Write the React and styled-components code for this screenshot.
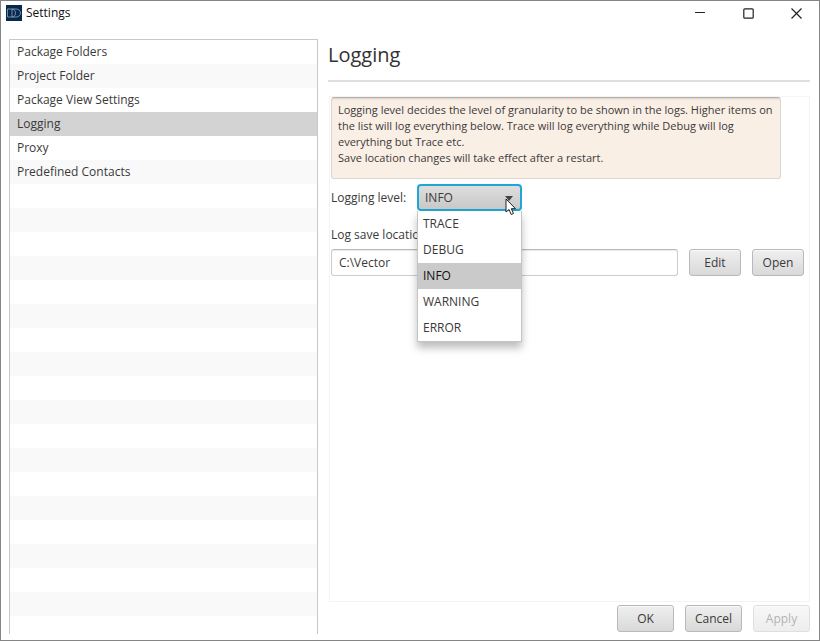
import React, { useState } from "react";
import styled, { createGlobalStyle, css } from "styled-components";

const GlobalStyle = createGlobalStyle`
  *, *::before, *::after { box-sizing: border-box; }
  body {
    margin: 0;
    background: #fff;
    color: #3a3a3a;
    font: 12px/16px "Segoe UI", "Open Sans", "Noto Sans", sans-serif;
  }
  button, input, select { font: inherit; color: inherit; }
`;

const Window = styled.div`
  height: 100vh;
  min-height: 400px;
  display: flex;
  flex-direction: column;
  border: 1px solid #858585;
  background: #fff;
`;

const TitleBar = styled.header`
  display: flex;
  align-items: center;
  gap: 4px;
  height: 24px;
  flex: none;
  padding-left: 5px;
  color: #111;
`;

const WindowTitle = styled.span`
  flex: 1;
`;

const WindowButton = styled.button`
  width: 48px;
  height: 24px;
  padding: 0;
  border: 0;
  background: none;
  display: grid;
  place-items: center;
  color: #222;
`;

const WindowControls = styled.div`
  display: flex;
  margin-right: -1px;
`;

const Body = styled.div`
  flex: 1;
  min-height: 0;
  display: grid;
  grid-template-columns: minmax(200px, 309fr) minmax(400px, 482fr);
  column-gap: 10px;
  padding: 14px 9px 6px 8px;
`;

const Categories = styled.nav`
  overflow: hidden;
  border: 1px solid #c8c8c8;
  border-bottom: 0;
  background: repeating-linear-gradient(#fff 0 24px, #f9f9f9 24px 48px);
`;

const CategoryList = styled.ul`
  list-style: none;
  margin: 0;
  padding: 0;
`;

const CategoryLink = styled.a`
  display: block;
  height: 24px;
  padding-left: 7px;
  line-height: 24px;
  color: inherit;
  text-decoration: none;
  ${(p) => p.$active && css`background: #d3d3d3;`}
`;

const Content = styled.main`
  display: flex;
  flex-direction: column;
  min-width: 0;
`;

const Heading = styled.h1`
  margin: 0;
  height: 43px;
  flex: none;
  border-bottom: 2px solid #e0e0e0;
  font-size: 20px;
  font-weight: 400;
  line-height: 32px;
  color: #333;
`;

const Panel = styled.section`
  flex: 1;
  min-height: 0;
  margin: 14px 0 0 1px;
  padding: 0 5px 0 1px;
  border: 1px solid #f4f4f4;
`;

const Notice = styled.p`
  margin: 0 23px 5px 0;
  height: 82px;
  padding: 4px 0 0 6px;
  border: 1px solid #ded6cf;
  border-top-color: #b5b0ab;
  border-radius: 3px;
  background: #faefe5;
  box-shadow: inset 0 2px 2px -1px #d8cfc7;
  font-size: 11px;
`;

const LevelRow = styled.div`
  display: flex;
  align-items: center;
  gap: 10px;
  height: 27px;
`;

const LevelLabel = styled.label`
  width: 76px;
  white-space: nowrap;
`;

const Combo = styled.div`
  position: relative;
  width: 105px;
`;

const LevelSelect = styled.select`
  appearance: none;
  display: block;
  width: 100%;
  height: 27px;
  padding: 0 6px;
  border: 2px solid #1ea6d4;
  border-radius: 4px;
  outline: 0;
  background: linear-gradient(#dedede, #c8c8c8);
`;

const ComboArrow = styled.svg`
  position: absolute;
  right: 9px;
  top: 12px;
  pointer-events: none;
`;

const Pointer = styled.svg`
  position: absolute;
  right: 5px;
  top: 14px;
  z-index: 2;
  pointer-events: none;
`;

const Options = styled.ul`
  position: absolute;
  z-index: 1;
  top: 27px;
  left: 0;
  right: 0;
  margin: 0;
  padding: 0;
  list-style: none;
  border: 1px solid #c4c4c4;
  border-top: 0;
  background: #fff;
  box-shadow: 0 6px 8px rgba(0, 0, 0, 0.26);
`;

const Option = styled.li`
  height: 26px;
  padding-left: 5px;
  line-height: 26px;
  ${(p) => p.$selected && css`
    background: #cacaca;
    color: #111;
  `}
`;

const LocationLabel = styled.label`
  display: block;
  margin: 16px 0 6px;
`;

const LocationRow = styled.div`
  display: flex;
  gap: 11px;
`;

const LocationInput = styled.input`
  flex: 1;
  min-width: 0;
  height: 27px;
  padding: 0 7px;
  border: 1px solid #cdcdcd;
  border-top-color: #b8b8b8;
  border-radius: 3px;
  box-shadow: inset 0 1px 1px #ececec;
  outline: 0;
`;

const Button = styled.button`
  width: ${(p) => (p.$wide ? "57px" : "52px")};
  height: 27px;
  padding: 0;
  border: 1px solid #b9b9b9;
  border-radius: 3px;
  background: linear-gradient(#efefef, #d9d9d9);
  box-shadow: inset 0 1px 0 #f8f8f8;
  &:disabled {
    opacity: 0.45;
    color: #555;
  }
`;

const Actions = styled.footer`
  display: flex;
  justify-content: flex-end;
  gap: 11px;
  padding: 3px 0 2px;
`;

const AppLogo = () => (
  <svg width="16" height="16" viewBox="0 0 16 16" aria-hidden="true">
    <rect width="16" height="16" fill="#07294d" />
    <g fill="none" stroke="#8fa6bd" strokeWidth="0.8">
      <path d="M1.500 4H5.500C8 4 9.500 5.800 9.500 8S8 12 5.500 12H1.500Z" />
      <path d="M6 4V12M6 4H10C12.800 4 14.500 5.800 14.500 8S12.800 12 10 12H6" />
    </g>
  </svg>
);

const categories = [
  "Package Folders",
  "Project Folder",
  "Package View Settings",
  "Logging",
  "Proxy",
  "Predefined Contacts",
];

const levels = ["TRACE", "DEBUG", "INFO", "WARNING", "ERROR"];

export default function App() {
  const [category, setCategory] = useState("Logging");
  const [level, setLevel] = useState("INFO");

  return (
    <Window>
      <GlobalStyle />
      <TitleBar>
        <AppLogo />
        <WindowTitle>Settings</WindowTitle>
        <WindowControls>
          <WindowButton aria-label="Minimize">
            <svg width="10" height="10" viewBox="0 0 10 10" stroke="currentColor"><path d="M0 4.500H10" /></svg>
          </WindowButton>
          <WindowButton aria-label="Maximize">
            <svg width="11" height="11" viewBox="0 0 11 11" fill="none" stroke="currentColor" strokeWidth="1.200"><rect x="0.800" y="0.800" width="9.400" height="9.400" rx="1" /></svg>
          </WindowButton>
          <WindowButton aria-label="Close">
            <svg width="11" height="11" viewBox="0 0 11 11" stroke="currentColor" strokeWidth="1.200"><path d="M0.500 0.500L10.500 10.500M10.500 0.500L0.500 10.500" /></svg>
          </WindowButton>
        </WindowControls>
      </TitleBar>
      <Body>
        <Categories aria-label="Settings categories">
          <CategoryList>
            {categories.map((name) => (
              <li key={name}>
                <CategoryLink href="#" $active={name === category} onClick={() => setCategory(name)}>
                  {name}
                </CategoryLink>
              </li>
            ))}
          </CategoryList>
        </Categories>
        <Content>
          <Heading>Logging</Heading>
          <Panel>
            <Notice>
              Logging level decides the level of granularity to be shown in the logs. Higher items on
              <br />
              the list will log everything below. Trace will log everything while Debug will log
              <br />
              everything but Trace etc.
              <br />
              Save location changes will take effect after a restart.
            </Notice>
            <LevelRow>
              <LevelLabel htmlFor="level">Logging level:</LevelLabel>
              <Combo>
                <LevelSelect id="level" value={level} onChange={(e) => setLevel(e.target.value)}>
                  {levels.map((name) => (
                    <option key={name}>{name}</option>
                  ))}
                </LevelSelect>
                <ComboArrow width="8" height="5" viewBox="0 0 8 5" aria-hidden="true">
                  <path d="M0 0H8L4 5Z" fill="#444" />
                </ComboArrow>
                <Options role="listbox" aria-label="Logging level">
                  {levels.map((name) => (
                    <Option key={name} role="option" aria-selected={name === level} $selected={name === level} onClick={() => setLevel(name)}>
                      {name}
                    </Option>
                  ))}
                </Options>
                <Pointer width="12" height="18" viewBox="0 0 12 18" aria-hidden="true">
                  <path d="M1 1V14L4 11.500L6.200 16.500L8.500 15.500L6.300 10.700H10.500Z" fill="#fff" stroke="#222" strokeWidth="1" />
                </Pointer>
              </Combo>
            </LevelRow>
            <LocationLabel htmlFor="location">Log save location:</LocationLabel>
            <LocationRow>
              <LocationInput id="location" defaultValue="C:\Vector" />
              <Button>Edit</Button>
              <Button>Open</Button>
            </LocationRow>
          </Panel>
          <Actions>
            <Button $wide>OK</Button>
            <Button $wide>Cancel</Button>
            <Button $wide disabled>Apply</Button>
          </Actions>
        </Content>
      </Body>
    </Window>
  );
}
